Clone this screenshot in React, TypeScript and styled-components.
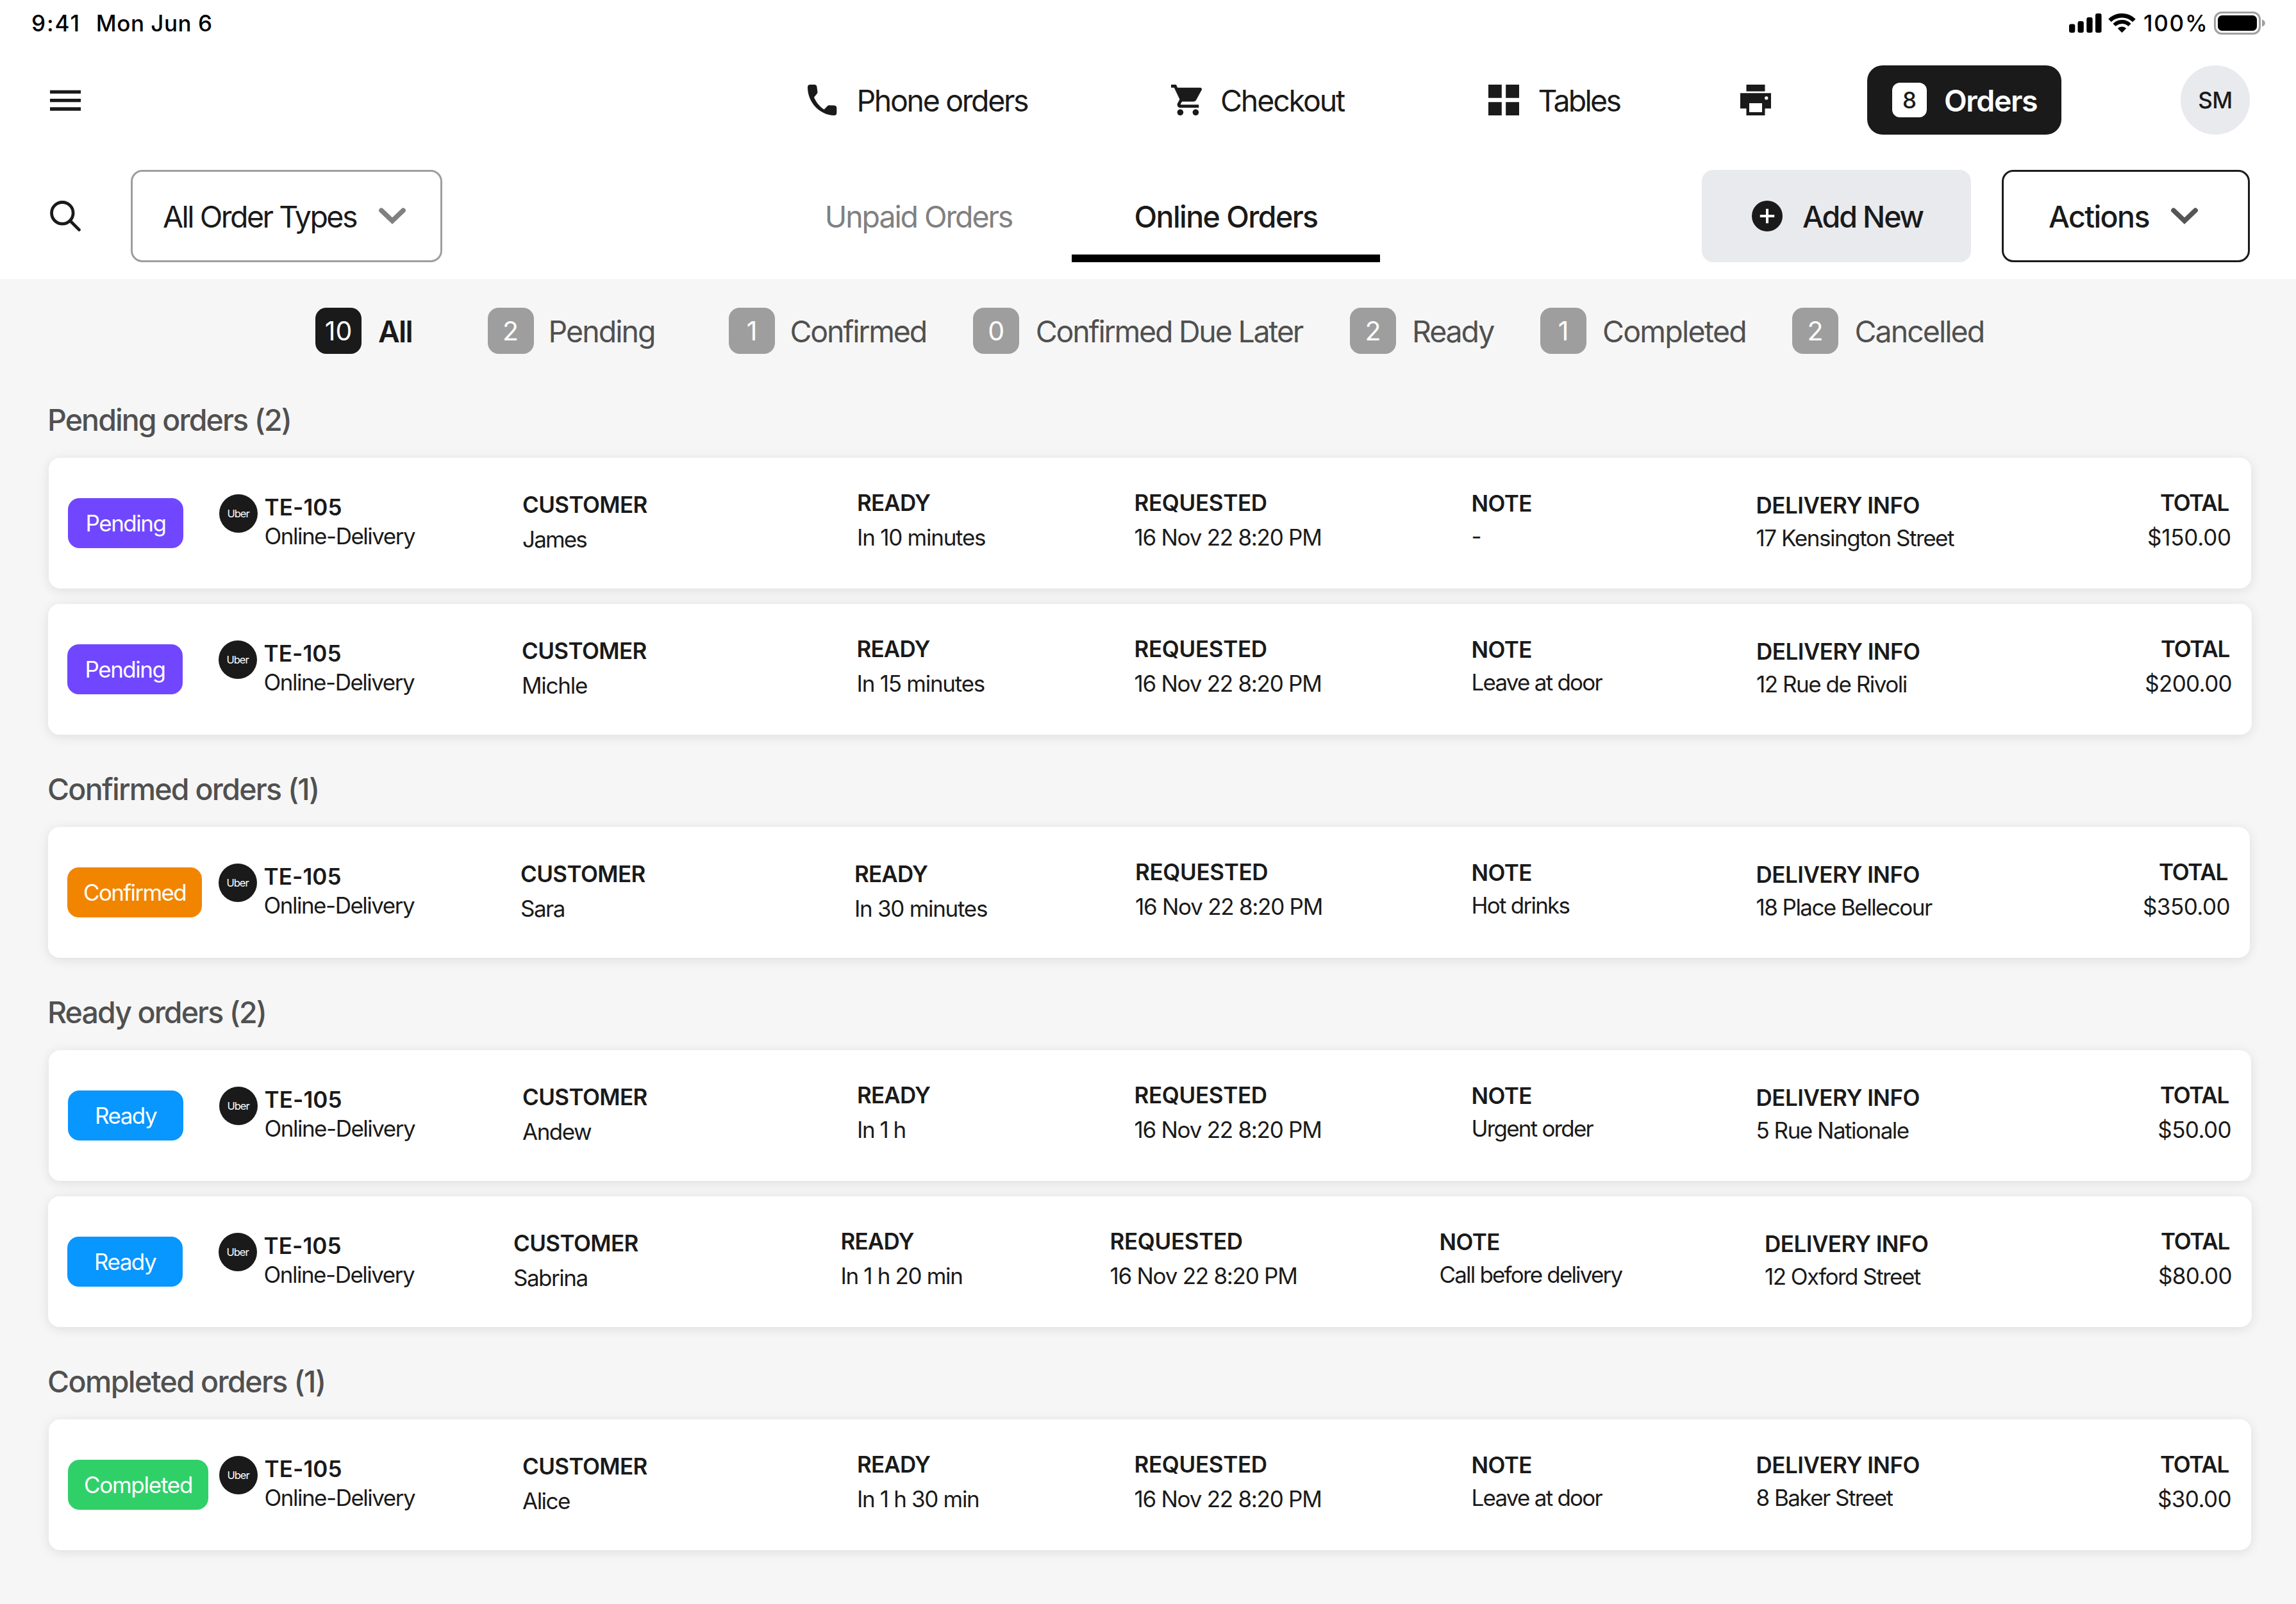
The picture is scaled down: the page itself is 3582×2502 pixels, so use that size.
import React from "react";
import styled, { createGlobalStyle } from "styled-components";

const ink = "#1a1a1a";
const grey = "#505050";
const muted = "#808080";
const silver = "#9e9e9e";
const haze = "#e9eaee";

const GlobalStyle = createGlobalStyle`
  * { box-sizing: border-box; }
  body { margin: 0; background: #f6f6f6; font-family: Inter, "Liberation Sans", sans-serif; color: ${ink}; }
  svg { display: block; flex: none; }
`;

/* ---------- text ---------- */

const Title = styled.span<{ $ls?: number; $weight?: number; $color?: string }>`
  padding-top: 2px;
  font-size: 46.5px;
  line-height: 60px;
  white-space: nowrap;
  font-weight: ${(p) => p.$weight ?? 400};
  letter-spacing: ${(p) => p.$ls ?? -2.1}px;
  color: ${(p) => p.$color ?? ink};
`;

const Small = styled.span<{ $ls?: number; $weight?: number }>`
  font-size: 35px;
  line-height: 44px;
  white-space: nowrap;
  font-weight: ${(p) => p.$weight ?? 400};
  letter-spacing: ${(p) => p.$ls ?? -1.45}px;
`;

/* ---------- page frame ---------- */

const Page = styled.div`
  width: 3582px;
  height: 2502px;
  overflow: hidden;
  background: #f6f6f6;
`;

const Header = styled.header`
  height: 435px;
  background: #fff;
`;

const StatusBar = styled.div`
  display: flex;
  align-items: center;
  height: 71px;
  padding: 0 48px 0 49px;
  color: #000;
`;

const StatusDate = styled(Small)`
  margin-left: 24px;
  margin-right: auto;
`;

const StatusPercent = styled(Small)`
  margin: 0 8.5px 0 12px;
`;

const StatusWifi = styled.div`
  margin-left: 10.4px;
`;

/* ---------- navigation ---------- */

const Nav = styled.nav`
  display: grid;
  grid-template-columns: 1189px 567.5px 495.5px 393px 198px 303px 1fr;
  align-items: center;
  height: 108px;
  margin-top: 31px;
  padding: 0 72px 0 70px;
`;

const NavItem = styled.div`
  display: flex;
  align-items: center;
  gap: 29.5px;
`;

const OrdersButton = styled.div`
  display: flex;
  align-items: center;
  gap: 27px;
  height: 108px;
  padding-left: 39px;
  border-radius: 24px;
  background: ${ink};
`;

const OrdersCount = styled.div`
  display: flex;
  align-items: center;
  justify-content: center;
  width: 54px;
  height: 54px;
  border-radius: 12px;
  background: #fff;
`;

const Avatar = styled.div`
  display: flex;
  align-items: center;
  justify-content: center;
  justify-self: end;
  width: 108px;
  height: 108px;
  border-radius: 50%;
  background: ${haze};
`;

/* ---------- toolbar ---------- */

const Toolbar = styled.div`
  display: flex;
  align-items: center;
  height: 144px;
  margin-top: 55px;
  padding-left: 78px;
`;

const Button = styled.div<{ $w: number; $ml: number; $pad: string; $border?: string; $fill?: string }>`
  display: flex;
  align-items: center;
  justify-content: space-between;
  width: ${(p) => p.$w}px;
  height: 144px;
  margin-left: ${(p) => p.$ml}px;
  padding: ${(p) => p.$pad};
  border: ${(p) => (p.$border ? `3px solid ${p.$border}` : "0")};
  border-radius: 18px;
  background: ${(p) => p.$fill ?? "#fff"};
`;

const Tabs = styled.div`
  display: flex;
  margin-left: 504px;
  height: 144px;
`;

const Tab = styled.div<{ $w: number; $active?: boolean }>`
  display: flex;
  align-items: center;
  justify-content: center;
  width: ${(p) => p.$w}px;
  padding-top: ${(p) => (p.$active ? 12 : 0)}px;
  border-bottom: ${(p) => (p.$active ? "12px solid #000" : "0")};
`;

/* ---------- filters ---------- */

const Filters = styled.div`
  display: flex;
  height: 72px;
  margin: 45px 0 0 492px;
`;

const Filter = styled.div<{ $w: number; $gap: number }>`
  display: flex;
  align-items: center;
  gap: ${(p) => p.$gap}px;
  width: ${(p) => p.$w}px;
`;

const FilterCount = styled.div<{ $active?: boolean }>`
  display: flex;
  flex: none;
  align-items: center;
  justify-content: center;
  width: 72px;
  height: 72px;
  border-radius: 17px;
  font-size: 41px;
  line-height: 50px;
  color: #fff;
  background: ${(p) => (p.$active ? ink : silver)};
`;

/* ---------- order groups ---------- */

const Groups = styled.main`
  display: flex;
  flex-direction: column;
  gap: 55px;
  margin-top: 73px;
`;

const Group = styled.section`
  display: flex;
  flex-direction: column;
`;

const GroupTitle = styled.h2<{ $ls: number }>`
  margin: 0 0 29px 74px;
  font-size: 46.5px;
  line-height: 60px;
  font-weight: 500;
  letter-spacing: ${(p) => p.$ls}px;
  color: ${grey};
`;

const CardList = styled.div`
  display: flex;
  flex-direction: column;
  gap: 24px;
`;

const Card = styled.article<{ $left: number; $right: number; $cols: string }>`
  display: grid;
  grid-template-columns: ${(p) => p.$cols};
  height: 204px;
  margin: 0 ${(p) => 3582 - p.$right}px 0 ${(p) => p.$left}px;
  padding: 0 31px 0 30px;
  border-radius: 18px;
  background: #fff;
  box-shadow: 0 3px 18px rgba(0, 0, 0, 0.1);
`;

const Source = styled.div`
  display: flex;
  align-items: flex-start;
`;

const PillSlot = styled.div`
  width: 235.5px;
  padding-top: 63px;
`;

const Pill = styled.div<{ $w: number; $bg: string }>`
  display: flex;
  align-items: center;
  justify-content: center;
  width: ${(p) => p.$w}px;
  height: 78px;
  border-radius: 18px;
  color: #fff;
  background: ${(p) => p.$bg};
`;

const UberMark = styled.div`
  display: flex;
  align-items: center;
  justify-content: center;
  width: 60px;
  height: 60px;
  margin: 57px 11px 0 0;
  border-radius: 50%;
  background: ${ink};
  color: #fff;
  font-size: 16.5px;
  letter-spacing: -1px;
`;

const Cell = styled.div<{ $top: number; $gap: number; $end?: boolean }>`
  display: flex;
  flex-direction: column;
  align-items: ${(p) => (p.$end ? "flex-end" : "flex-start")};
  gap: ${(p) => p.$gap}px;
  padding-top: ${(p) => p.$top}px;
`;

const DeliveryAndTotal = styled.div`
  display: flex;
  justify-content: space-between;
`;

const TotalLabel = styled(Small)`
  margin-right: 4px;
`;

/* ---------- icons ---------- */

const MenuIcon = () => (
  <svg width="64" height="64" viewBox="0 -0.25 24 24" fill={ink}>
    <path d="M3 18h18v-2H3v2zm0-5h18v-2H3v2zm0-7v2h18V6H3z" />
  </svg>
);

const PhoneIcon = () => (
  <svg width="48" height="48" viewBox="0 0 48 48" fill={ink}>
    <path d="M1 4Q1 0 5 0H11.5Q15 0 15.4 3.5L16.4 11.5Q16.6 13.2 15.3 14.5L11 19.7C14.5 28 19.5 34 26.7 38.7L31.5 33.7Q32.8 32.2 34.8 32.3L42.8 32.6Q46.3 33 46.3 36.5V44Q46.3 48 42.3 48C20 47.5 1 28 1 4Z" />
  </svg>
);

const CartIcon = () => (
  <svg width="48" height="48" viewBox="1 2 20 20" fill={ink}>
    <path d="M7 18c-1.1 0-1.99.9-1.99 2S5.9 22 7 22s2-.9 2-2-.9-2-2-2zM1 2v2h2l3.6 7.59-1.35 2.45c-.16.28-.25.61-.25.96 0 1.1.9 2 2 2h12v-2H7.42c-.14 0-.25-.11-.25-.25l.03-.12.9-1.63h7.45c.75 0 1.41-.41 1.75-1.03l3.58-6.49A1.003 1.003 0 0 0 20 4H5.21l-.94-2H1zm16 16c-1.1 0-1.99.9-1.99 2s.89 2 1.99 2 2-.9 2-2-.9-2-2-2z" />
  </svg>
);

const TablesIcon = () => (
  <svg width="48" height="48" viewBox="0 0 48 48" fill={ink}>
    <path d="M0 0h20.8v20.8H0zM27.2 0H48v20.8H27.2zM0 27.2h20.8V48H0zM27.2 27.2H48V48H27.2z" />
  </svg>
);

const PrinterIcon = () => (
  <svg width="48" height="48" viewBox="0 0 48 48" fill={ink}>
    <path d="M9.5 0h29v10.5h-29z" />
    <path
      fillRule="evenodd"
      d="M0 13.2h48v24h-9.5V48h-29V37.2H0zM14 29v14h20V29zM40.8 18.2a2.7 2.7 0 1 0 0 5.4a2.7 2.7 0 1 0 0-5.4z"
    />
  </svg>
);

const SearchIcon = () => (
  <svg width="48" height="48" viewBox="0 0 48 48" fill="none" stroke={ink} strokeWidth="4.8" strokeLinecap="round">
    <circle cx="19.3" cy="19.3" r="16.8" />
    <path d="M31.5 31.5L45.4 45.4" />
  </svg>
);

const Chevron = ({ color }: { color: string }) => (
  <svg width="42" height="26" viewBox="0 0 42 26" fill="none" stroke={color} strokeWidth="7.6" strokeLinecap="round">
    <path d="M4 4.2L21 20.4L38 4.2" />
  </svg>
);

const PlusIcon = () => (
  <svg width="48" height="48" viewBox="0 0 48 48">
    <circle cx="24" cy="24" r="24" fill={ink} />
    <path d="M24 12.8V35.2M12.8 24H35.2" stroke="#fff" strokeWidth="4" />
  </svg>
);

const SignalIcon = () => (
  <svg width="51" height="30" viewBox="0 0 51 30">
    <rect x="0" y="16.5" width="9.3" height="13.5" rx="3" />
    <rect x="13.5" y="12" width="9.3" height="18" rx="3" />
    <rect x="27.3" y="6" width="9.3" height="24" rx="3" />
    <rect x="41" y="0" width="9.6" height="30" rx="3" />
  </svg>
);

const WifiIcon = () => (
  <svg width="43" height="30" viewBox="0 0 43 30" fill="none" stroke="#000">
    <path d="M2.55 11.05A26.8 26.8 0 0 1 40.45 11.05" strokeWidth="6.5" />
    <path d="M9.5 18A17 17 0 0 1 33.5 18" strokeWidth="6" />
    <path d="M21.5 30L14.8 23.3A9.5 9.5 0 0 1 28.2 23.3Z" fill="#000" stroke="none" />
  </svg>
);

const BatteryIcon = () => (
  <svg width="80" height="36" viewBox="0 0 80 36">
    <rect x="1.5" y="1.5" width="70" height="33" rx="10.5" fill="none" stroke="#a0a0a0" strokeWidth="3" />
    <rect x="6" y="6" width="61" height="24" rx="6.5" />
    <path d="M75 12.2C81.5 15 81.5 21 75 23.8Z" fill="#a0a0a0" />
  </svg>
);

/* ---------- data ---------- */

type Tracked = [text: string, spacing?: number];

interface Order {
  customer: Tracked;
  ready: Tracked;
  note: Tracked;
  address: Tracked;
  total: Tracked;
  card: [left: number, right: number];
  /** left edges of customer, ready, requested, note and delivery */
  at: [number, number, number, number, number];
  readyTop?: number;
  addressTop?: number;
}

interface OrderGroup {
  title: Tracked;
  status: Tracked;
  pill: number;
  color: string;
  orders: Order[];
}

const filters: { count: number; label: string; w: number; gap: number; ls: number }[] = [
  { count: 10, label: "All", w: 268.5, gap: 26, ls: -1.75 },
  { count: 2, label: "Pending", w: 376.5, gap: 23, ls: -1.95 },
  { count: 1, label: "Confirmed", w: 381.3, gap: 23.5, ls: -2.2 },
  { count: 0, label: "Confirmed Due Later", w: 587.7, gap: 25.5, ls: -2.22 },
  { count: 2, label: "Ready", w: 297, gap: 25, ls: -2.1 },
  { count: 1, label: "Completed", w: 393, gap: 25, ls: -1.75 },
  { count: 2, label: "Cancelled", w: 330, gap: 25.5, ls: -1.95 },
];

const groups: OrderGroup[] = [
  {
    title: ["Pending orders (2)", -1.9],
    status: ["Pending", -1.5],
    pill: 180,
    color: "#7047ff",
    orders: [
      {
        customer: ["James", -1.85],
        ready: ["In 10 minutes", -1.25],
        note: ["-"],
        address: ["17 Kensington Street", -1.45],
        total: ["$150.00", -0.2],
        card: [76, 3512],
        at: [815, 1337, 1769.5, 2295.5, 2739.5],
      },
      {
        customer: ["Michle", -1.25],
        ready: ["In 15 minutes", -1.25],
        note: ["Leave at door", -1.77],
        address: ["12 Rue de Rivoli", -1.49],
        total: ["$200.00", -0.66],
        card: [75, 3513],
        at: [814, 1336.5, 1769.5, 2295.5, 2740],
      },
    ],
  },
  {
    title: ["Confirmed orders (1)", -1.75],
    status: ["Confirmed", -1.66],
    pill: 210,
    color: "#f28500",
    orders: [
      {
        customer: ["Sara", -1.5],
        ready: ["In 30 minutes", -1.3],
        note: ["Hot drinks", -1.75],
        address: ["18 Place Bellecour", -1.55],
        total: ["$350.00", -0.55],
        card: [75, 3510],
        at: [812, 1333, 1771, 2295.5, 2739.5],
        readyTop: 51.3,
      },
    ],
  },
  {
    title: ["Ready orders (2)", -1.9],
    status: ["Ready", -1.5],
    pill: 180,
    color: "#0896ff",
    orders: [
      {
        customer: ["Andew", -1.5],
        ready: ["In 1 h", -1.5],
        note: ["Urgent order", -1.8],
        address: ["5 Rue Nationale", -1.5],
        total: ["$50.00", -0.6],
        card: [76, 3512],
        at: [815, 1337, 1769.5, 2295.5, 2739.5],
      },
      {
        customer: ["Sabrina", -1.5],
        ready: ["In 1 h 20 min", -1.35],
        note: ["Call before delivery", -1.82],
        address: ["12 Oxford Street", -1.55],
        total: ["$80.00", -0.6],
        card: [75, 3513],
        at: [801, 1311.5, 1731.5, 2245.5, 2753],
      },
    ],
  },
  {
    title: ["Completed orders (1)", -1.6],
    status: ["Completed", -1.25],
    pill: 219,
    color: "#30d069",
    orders: [
      {
        customer: ["Alice", -1.5],
        ready: ["In 1 h 30 min", -1.35],
        note: ["Leave at door", -1.77],
        address: ["8 Baker Street", -1.55],
        total: ["$30.00", -0.6],
        card: [76, 3512],
        at: [815, 1337, 1769.5, 2295.5, 2739.5],
        addressTop: 49.3,
      },
    ],
  },
];

/* ---------- pieces ---------- */

interface FieldProps {
  label: Tracked;
  value: Tracked;
  top: number;
  gap: number;
}

const Field = ({ label, value, top, gap }: FieldProps) => (
  <Cell $top={top} $gap={gap}>
    <Small $weight={600} $ls={label[1]}>{label[0]}</Small>
    <Small $ls={value[1]}>{value[0]}</Small>
  </Cell>
);

const columns = (o: Order) => {
  const edges = [o.card[0] + 30, ...o.at];
  const widths = o.at.map((x, i) => `${x - edges[i]}px`);
  return `${widths.join(" ")} 1fr`;
};

const OrderCard = ({ order, group }: { order: Order; group: OrderGroup }) => (
  <Card $left={order.card[0]} $right={order.card[1]} $cols={columns(order)}>
    <Source>
      <PillSlot>
        <Pill $w={group.pill} $bg={group.color}>
          <Small $ls={group.status[1]}>{group.status[0]}</Small>
        </Pill>
      </PillSlot>
      <UberMark>Uber</UberMark>
      <Cell $top={55.3} $gap={1}>
        <Small $weight={600} $ls={0.1}>TE-105</Small>
        <Small $ls={-1.49}>Online-Delivery</Small>
      </Cell>
    </Source>
    <Field label={["CUSTOMER", -0.6]} value={order.customer} top={51.3} gap={9.7} />
    <Field label={["READY", -0.84]} value={order.ready} top={order.readyTop ?? 48.2} gap={10} />
    <Field label={["REQUESTED", -0.35]} value={["16 Nov 22 8:20 PM", -1.26]} top={48.2} gap={10} />
    <Field label={["NOTE", -0.6]} value={order.note} top={49.3} gap={7} />
    <DeliveryAndTotal>
      <Field label={["DELIVERY INFO", -0.51]} value={order.address} top={order.addressTop ?? 52.3} gap={7} />
      <Cell $top={48.2} $gap={10} $end>
        <TotalLabel $weight={600} $ls={-1.21}>TOTAL</TotalLabel>
        <Small $ls={order.total[1]}>{order.total[0]}</Small>
      </Cell>
    </DeliveryAndTotal>
  </Card>
);

export default function App() {
  return (
    <>
      <GlobalStyle />
      <Page>
        <Header>
          <StatusBar>
            <Small $weight={500} $ls={1.9}>9:41</Small>
            <StatusDate $weight={500} $ls={0.5}>Mon Jun 6</StatusDate>
            <SignalIcon />
            <StatusWifi>
              <WifiIcon />
            </StatusWifi>
            <StatusPercent $weight={500} $ls={1.76}>100%</StatusPercent>
            <BatteryIcon />
          </StatusBar>

          <Nav>
            <MenuIcon />
            <NavItem>
              <PhoneIcon />
              <Title $ls={-2.35}>Phone orders</Title>
            </NavItem>
            <NavItem>
              <CartIcon />
              <Title $ls={-2.14}>Checkout</Title>
            </NavItem>
            <NavItem>
              <TablesIcon />
              <Title $ls={-2.71}>Tables</Title>
            </NavItem>
            <PrinterIcon />
            <OrdersButton>
              <OrdersCount>
                <Small $weight={500} $ls={0}>8</Small>
              </OrdersCount>
              <Title $weight={600} $ls={-1.43} $color="#fff">Orders</Title>
            </OrdersButton>
            <Avatar>
              <Small $weight={500} $ls={-0.6}>SM</Small>
            </Avatar>
          </Nav>

          <Toolbar>
            <SearchIcon />
            <Button $w={486} $ml={78} $pad="0 54px 0 47px" $border={silver}>
              <Title $ls={-2.5}>All Order Types</Title>
              <Chevron color={muted} />
            </Button>
            <Tabs>
              <Tab $w={478}>
                <Title $ls={-2.1} $color={muted}>Unpaid Orders</Title>
              </Tab>
              <Tab $w={481} $active>
                <Title $weight={500} $ls={-1.58}>Online Orders</Title>
              </Tab>
            </Tabs>
            <Button $w={420} $ml={502} $pad="0 75px 0 78px" $fill={haze}>
              <PlusIcon />
              <Title $weight={500} $ls={-2.12}>Add New</Title>
            </Button>
            <Button $w={387} $ml={48} $pad="0 78px 0 70px" $border={ink}>
              <Title $weight={500} $ls={-1.59}>Actions</Title>
              <Chevron color="#555" />
            </Button>
          </Toolbar>
        </Header>

        <Filters>
          {filters.map((f, i) => (
            <Filter key={f.label} $w={f.w} $gap={f.gap}>
              <FilterCount $active={i === 0}>{f.count}</FilterCount>
              <Title $ls={f.ls} $weight={i === 0 ? 600 : 400} $color={i === 0 ? ink : grey}>
                {f.label}
              </Title>
            </Filter>
          ))}
        </Filters>

        <Groups>
          {groups.map((g) => (
            <Group key={g.title[0]}>
              <GroupTitle $ls={g.title[1] ?? -1.8}>{g.title[0]}</GroupTitle>
              <CardList>
                {g.orders.map((o) => (
                  <OrderCard key={o.customer[0]} order={o} group={g} />
                ))}
              </CardList>
            </Group>
          ))}
        </Groups>
      </Page>
    </>
  );
}
